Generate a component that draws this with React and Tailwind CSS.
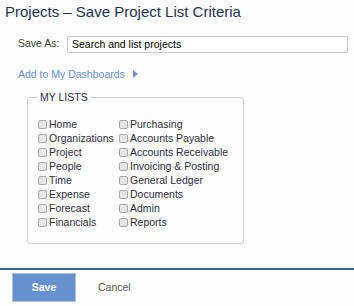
import React from "react";

const col1 = ["Home", "Organizations", "Project", "People", "Time", "Expense", "Forecast", "Financials"];
const col2 = ["Purchasing", "Accounts Payable", "Accounts Receivable", "Invoicing & Posting", "General Ledger", "Documents", "Admin", "Reports"];

function Item({ label }) {
  return (
    <div className="flex h-[14px] items-center">
      <span className="box-border block h-[9px] w-[9px] shrink-0 rounded-[2px] border border-[#a8a8a8] bg-[#e6e6e6]" />
      <span className="ml-[2px] whitespace-nowrap leading-[14px] text-[#2f2d45]">{label}</span>
    </div>
  );
}

export default function App() {
  return (
    <div
      className="relative h-[306px] w-[354px] overflow-hidden bg-[#fdfefd] text-[10.5px]"
      style={{ fontFamily: '"Liberation Sans", Arial, sans-serif' }}
    >
      <div className="pl-[5px] pt-[3px] text-[15px] leading-[17px] text-[#1f3354]">
        Projects – Save Project List Criteria
      </div>

      <div className="mt-[16px] flex items-start pl-[18px]">
        <div className="w-[49px] leading-[14px] text-[#3a3a3a]">Save As:</div>
        <div className="box-border h-[17px] w-[281px] rounded-[2px] border border-[#c9c9c9] bg-white pl-[4px] leading-[15px] text-black">
          Search and list projects
        </div>
      </div>

      <div className="mt-[14px] flex items-center pl-[18px] leading-[14px] text-[#6a8ed3]">
        <span>Add to My Dashboards</span>
        <svg width="5" height="8" viewBox="0 0 5 8" className="ml-[8px]">
          <polygon points="0,0 5,4 0,8" fill="#6f8fd0" />
        </svg>
      </div>

      <fieldset className="ml-[27px] mt-[9px] box-border w-[217px] rounded-[3px] border border-[#cfcfcf] pb-[14px] pl-[10px] pt-[13px]">
        <legend className="px-[2px] leading-[14px] text-[#2f2a4a]">MY LISTS</legend>
        <div className="grid grid-cols-[81px_auto]">
          <div>
            {col1.map((l) => (
              <Item key={l} label={l} />
            ))}
          </div>
          <div>
            {col2.map((l) => (
              <Item key={l} label={l} />
            ))}
          </div>
        </div>
      </fieldset>

      <div className="absolute left-0 right-0 top-[268px] h-[2px] bg-[#3a6298]" />
      <div className="absolute left-0 top-[273px] flex items-center">
        <div className="ml-[12px] box-border flex h-[29px] w-[64px] items-center justify-center border border-[#a9c0e0] bg-[#6892cf] text-[10.5px] font-bold text-white">
          Save
        </div>
        <div className="ml-[22px] text-[#555]">Cancel</div>
      </div>
    </div>
  );
}
